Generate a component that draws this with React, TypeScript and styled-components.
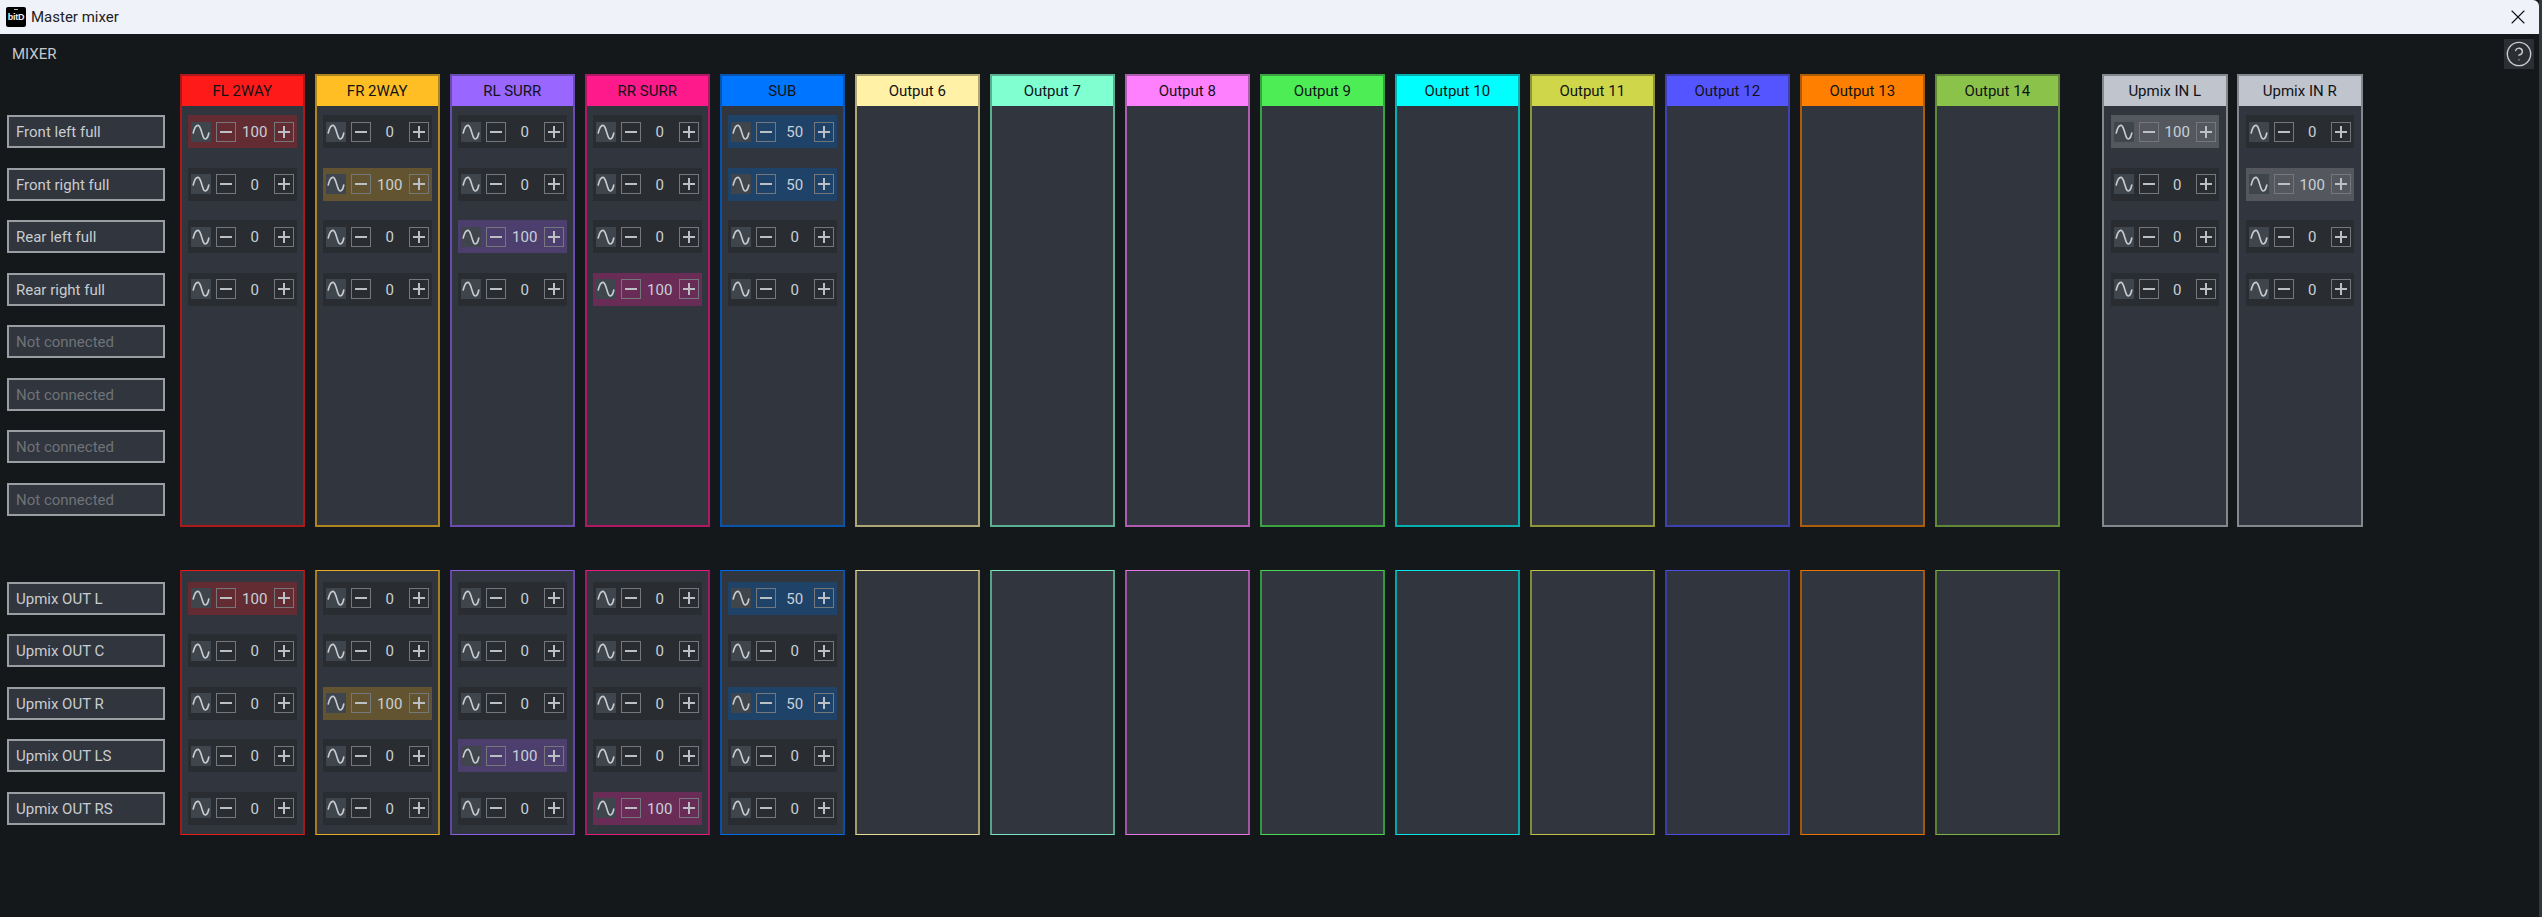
import React from "react";
import styled, { createGlobalStyle } from "styled-components";
import { CircleHelp, X } from "lucide-react";

type Channel = {
  name: string;
  color: string;
  on: string;
  top?: number[];
  bottom?: number[];
};

const channels: Channel[] = [
  { name: "FL 2WAY", color: "#ff1a1a", on: "#632c33", top: [100, 0, 0, 0], bottom: [100, 0, 0, 0, 0] },
  { name: "FR 2WAY", color: "#ffbf24", on: "#625430", top: [0, 100, 0, 0], bottom: [0, 0, 100, 0, 0] },
  { name: "RL SURR", color: "#9966ff", on: "#4c3f6e", top: [0, 0, 100, 0], bottom: [0, 0, 0, 100, 0] },
  { name: "RR SURR", color: "#ff1a8c", on: "#682c56", top: [0, 0, 0, 100], bottom: [0, 0, 0, 0, 100] },
  { name: "SUB", color: "#0075ff", on: "#1f4268", top: [50, 50, 0, 0], bottom: [50, 0, 50, 0, 0] },
  { name: "Output 6", color: "#fff2a6", on: "" },
  { name: "Output 7", color: "#80ffd0", on: "" },
  { name: "Output 8", color: "#ff80ff", on: "" },
  { name: "Output 9", color: "#4dee55", on: "" },
  { name: "Output 10", color: "#00ffff", on: "" },
  { name: "Output 11", color: "#cfd64a", on: "" },
  { name: "Output 12", color: "#5555ff", on: "" },
  { name: "Output 13", color: "#ff8000", on: "" },
  { name: "Output 14", color: "#8bc34a", on: "" },
];

const upmix: Channel[] = [
  { name: "Upmix IN L", color: "#c0c4cc", on: "#54585e", top: [100, 0, 0, 0] },
  { name: "Upmix IN R", color: "#c0c4cc", on: "#54585e", top: [0, 100, 0, 0] },
];

const inputs = [
  "Front left full",
  "Front right full",
  "Rear left full",
  "Rear right full",
  "Not connected",
  "Not connected",
  "Not connected",
  "Not connected",
];

const upmixOuts = ["Upmix OUT L", "Upmix OUT C", "Upmix OUT R", "Upmix OUT LS", "Upmix OUT RS"];

const Wave = () => (
  <svg width="20" height="20" viewBox="0 0 20 20" fill="none" stroke="#c8ccd0" strokeWidth="1.6" strokeLinecap="round">
    <path d="M2.2 11C3.5 5.5 5.2 3 7.3 3.4C9.8 4 10.6 12 12.6 15.6C14 18 16.6 17.6 17.8 11" />
  </svg>
);

const GainRow = ({ value, on }: { value: number; on: string }) => (
  <Gain $bg={value > 0 ? on : "#292d31"}>
    <WaveButton>
      <Wave />
    </WaveButton>
    <StepButton>
      <Minus />
    </StepButton>
    <Value>{value}</Value>
    <StepButton>
      <Minus />
      <PlusBar />
    </StepButton>
  </Gain>
);

const Strip = ({ channel }: { channel: Channel }) => (
  <Column $color={channel.color}>
    <Header $color={channel.color}>{channel.name}</Header>
    <Rows>
      {channel.top?.map((v, i) => <GainRow key={i} value={v} on={channel.on} />)}
    </Rows>
  </Column>
);

const SendStrip = ({ channel }: { channel: Channel }) => (
  <SendColumn $color={channel.color}>
    <SendRows>
      {channel.bottom?.map((v, i) => <GainRow key={i} value={v} on={channel.on} />)}
    </SendRows>
  </SendColumn>
);

export default function App() {
  return (
    <>
      <GlobalStyle />
      <Desktop>
        <Window>
          <TitleBar>
            <Logo>
              <LogoText>bitD</LogoText>
            </Logo>
            <Title>Master mixer</Title>
            <CloseButton>
              <X size={24} strokeWidth={1.1} color="#111" />
            </CloseButton>
          </TitleBar>

          <TopBar>
            <MixerLabel>MIXER</MixerLabel>
            <HelpButton>
              <CircleHelp size={28} strokeWidth={1.2} color="#c8ccd0" />
            </HelpButton>
          </TopBar>

          <MatrixRow $height={453}>
            <Labels $top={41}>
              {inputs.map((name, i) => (
                <InputLabel key={i} $muted={name === "Not connected"}>
                  {name}
                </InputLabel>
              ))}
            </Labels>
            {channels.map((c) => (
              <Strip key={c.name} channel={c} />
            ))}
            <UpmixGroup>
              {upmix.map((c) => (
                <Strip key={c.name} channel={c} />
              ))}
            </UpmixGroup>
          </MatrixRow>

          <MatrixRow $height={265} $gapTop={43}>
            <Labels $top={11.7}>
              {upmixOuts.map((name) => (
                <InputLabel key={name}>{name}</InputLabel>
              ))}
            </Labels>
            {channels.map((c) => (
              <SendStrip key={c.name} channel={c} />
            ))}
          </MatrixRow>
        </Window>
        <NextWindow />
      </Desktop>
    </>
  );
}

const GlobalStyle = createGlobalStyle`
  html, body {
    margin: 0;
    padding: 0;
    width: 100%;
    height: 100%;
    overflow: hidden;
    background: #14181b;
  }
  * {
    box-sizing: border-box;
  }
`;

const Desktop = styled.div`
  display: flex;
  width: 100vw;
  height: 100vh;
  font-family: Roboto, "Noto Sans", sans-serif;
`;

const Window = styled.div`
  flex: 1;
  min-width: 0;
  background: #14181b;
`;

const NextWindow = styled.div`
  width: 3px;
  background: #33373c;
`;

const TitleBar = styled.div`
  display: flex;
  align-items: center;
  height: 34px;
  padding-left: 6px;
  background: #eff3f9;
  border-top-right-radius: 6px;
`;

const Logo = styled.div`
  display: flex;
  align-items: center;
  justify-content: center;
  position: relative;
  width: 20px;
  height: 20px;
  background: #000;
  border-radius: 2px;

  &::before {
    content: "";
    position: absolute;
    top: 2px;
    left: 8px;
    width: 4px;
    height: 1px;
    background: #bbb;
  }
`;

const LogoText = styled.span`
  font-family: "Liberation Sans", sans-serif;
  font-size: 9px;
  font-weight: 700;
  letter-spacing: -0.2px;
  color: #f0f0f0;
`;

const Title = styled.span`
  margin-left: 5px;
  font-size: 15px;
  color: #222;
`;

const CloseButton = styled.div`
  display: flex;
  margin-left: auto;
  margin-right: 9px;
`;

const TopBar = styled.div`
  display: flex;
  justify-content: space-between;
  align-items: flex-start;
  height: 40px;
  padding: 5px 5px 0 12px;
`;

const MixerLabel = styled.span`
  font-size: 15px;
  line-height: 30px;
  color: #c4c8cc;
`;

const HelpButton = styled.div`
  display: flex;
  align-items: center;
  justify-content: center;
  width: 30px;
  height: 30px;
  background: #2b2f33;
`;

const MatrixRow = styled.div<{ $height: number; $gapTop?: number }>`
  display: flex;
  gap: 9.5px;
  height: ${(p) => p.$height}px;
  margin-top: ${(p) => p.$gapTop ?? 0}px;
  padding-left: 7px;
`;

const Labels = styled.div<{ $top: number }>`
  display: flex;
  flex-direction: column;
  gap: 19.5px;
  width: 158px;
  margin-right: 5px;
  padding-top: ${(p) => p.$top}px;
`;

const InputLabel = styled.div<{ $muted?: boolean }>`
  display: flex;
  align-items: center;
  height: 33px;
  padding: 1px 0 0 7px;
  background: #31353d;
  border: 2px solid #9a9ea2;
  font-size: 15px;
  color: ${(p) => (p.$muted ? "#6e7378" : "#c8ccd0")};
`;

const Column = styled.div<{ $color: string }>`
  display: flex;
  flex-direction: column;
  width: 125.5px;
  background: #31353d;
  border: 2px solid color-mix(in srgb, ${(p) => p.$color} 65%, #14181b);
`;

const SendColumn = styled.div<{ $color: string }>`
  width: 125.5px;
  background: #31353d;
  border-style: solid;
  border-width: 1px 2px;
  border-color: color-mix(in srgb, ${(p) => p.$color} 90%, #14181b)
    color-mix(in srgb, ${(p) => p.$color} 60%, #14181b);
`;

const Header = styled.div<{ $color: string }>`
  display: flex;
  align-items: center;
  justify-content: center;
  flex: none;
  height: 29.5px;
  background: ${(p) => p.$color};
  font-size: 15px;
  color: #111317;
`;

const Rows = styled.div`
  display: flex;
  flex-direction: column;
  gap: 19.5px;
  padding: 9.5px 6.5px 0;
`;

const SendRows = styled(Rows)`
  padding: 10.7px 6.5px 0;
`;

const UpmixGroup = styled.div`
  display: flex;
  gap: 9.5px;
  margin-left: 32.5px;
`;

const Gain = styled.div<{ $bg: string }>`
  display: flex;
  align-items: center;
  height: 33px;
  padding: 0 3px;
  background: ${(p) => p.$bg};
`;

const WaveButton = styled.div`
  display: flex;
  flex: none;
  width: 20px;
  height: 20px;
  margin-right: 5px;
  background: #3e454c;
`;

const StepButton = styled.div`
  display: flex;
  align-items: center;
  justify-content: center;
  position: relative;
  flex: none;
  width: 20px;
  height: 20px;
  border: 1px solid #74787c;
`;

const Minus = styled.span`
  display: block;
  width: 12px;
  height: 2px;
  background: #bcc0c4;
`;

const PlusBar = styled.span`
  position: absolute;
  left: 8px;
  top: 3px;
  width: 2px;
  height: 12px;
  background: #bcc0c4;
`;

const Value = styled.span`
  flex: 1;
  padding-top: 1px;
  text-align: center;
  font-size: 15px;
  color: #c8d0d8;
`;
